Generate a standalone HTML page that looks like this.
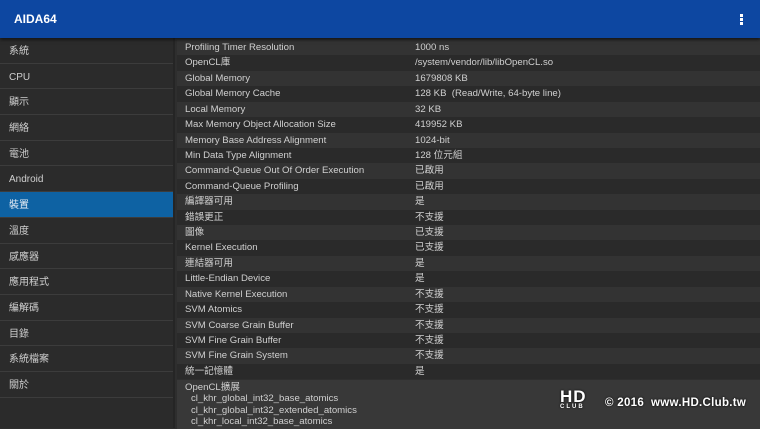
<!DOCTYPE html>
<html><head><meta charset="utf-8"><style>
*{margin:0;padding:0;box-sizing:border-box}
body{width:760px;height:428px;overflow:hidden;background:#2e2e2e;font-family:"Liberation Sans","Noto Sans CJK TC",sans-serif;color:#d0d0d0;position:relative}
#hdr{position:absolute;left:0;top:0;width:760px;height:38px;background:#0d47a1;box-shadow:0 2px 3px rgba(0,0,0,.5);z-index:2}
#hdr .t{position:absolute;left:14px;top:12px;font-size:12px;font-weight:bold;color:#fff}
#hdr .m{position:absolute;left:740px;top:14px;width:3px}
#hdr .m i{display:block;width:3px;height:2.5px;background:#fff;margin-bottom:1.5px}
#side{position:absolute;left:0;top:38px;width:175px;height:390px;background:#2b2b2b;border-right:2px solid #252525}
#side div{height:25.7px;line-height:26px;padding-top:1px;padding-left:9px;font-size:10px;border-bottom:1px solid #3c3c3c;color:#cfcfcf}
#side div.a{background:#0e62a3;color:#e8eef6}
#main{position:absolute;left:177px;top:40px;width:583px}
.r{height:15.43px;line-height:15.43px;font-size:9.6px;position:relative;background:#2a2a2a}
.r:nth-child(odd){background:#333333}
.r span{position:absolute;left:8px}
.r b{font-weight:normal;position:absolute;left:238px}
#ext{position:absolute;left:177px;top:379.5px;width:583px;height:49px;background:#383838;font-size:9.6px;padding:2px 8px;line-height:11.5px}
#ext div{padding-left:6px}
#wm{position:absolute;left:560px;top:389px;color:#fff;font-size:11.5px;font-weight:bold;text-shadow:0 0 2px #000}
#wm .hd{position:absolute;left:0;top:-1px;font-size:17px;line-height:17px;letter-spacing:1px}
#wm .cl{position:absolute;left:0;top:15px;font-size:6px;letter-spacing:2px}
#wm .tx{position:absolute;left:45px;top:8px;white-space:nowrap;letter-spacing:0.3px}
</style></head><body>
<div id="hdr"><div class="t">AIDA64</div><div class="m"><i></i><i></i><i></i></div></div>
<div id="side">
<div>系統</div><div>CPU</div><div>顯示</div><div>網絡</div><div>電池</div><div>Android</div><div class="a">裝置</div><div>溫度</div><div>感應器</div><div>應用程式</div><div>編解碼</div><div>目錄</div><div>系統檔案</div><div>關於</div>
</div>
<div id="main">
<div class="r"><span>Profiling Timer Resolution</span><b>1000 ns</b></div>
<div class="r"><span>OpenCL庫</span><b>/system/vendor/lib/libOpenCL.so</b></div>
<div class="r"><span>Global Memory</span><b>1679808 KB</b></div>
<div class="r"><span>Global Memory Cache</span><b>128 KB&nbsp; (Read/Write, 64-byte line)</b></div>
<div class="r"><span>Local Memory</span><b>32 KB</b></div>
<div class="r"><span>Max Memory Object Allocation Size</span><b>419952 KB</b></div>
<div class="r"><span>Memory Base Address Alignment</span><b>1024-bit</b></div>
<div class="r"><span>Min Data Type Alignment</span><b>128 位元組</b></div>
<div class="r"><span>Command-Queue Out Of Order Execution</span><b>已啟用</b></div>
<div class="r"><span>Command-Queue Profiling</span><b>已啟用</b></div>
<div class="r"><span>編譯器可用</span><b>是</b></div>
<div class="r"><span>錯誤更正</span><b>不支援</b></div>
<div class="r"><span>圖像</span><b>已支援</b></div>
<div class="r"><span>Kernel Execution</span><b>已支援</b></div>
<div class="r"><span>連結器可用</span><b>是</b></div>
<div class="r"><span>Little-Endian Device</span><b>是</b></div>
<div class="r"><span>Native Kernel Execution</span><b>不支援</b></div>
<div class="r"><span>SVM Atomics</span><b>不支援</b></div>
<div class="r"><span>SVM Coarse Grain Buffer</span><b>不支援</b></div>
<div class="r"><span>SVM Fine Grain Buffer</span><b>不支援</b></div>
<div class="r"><span>SVM Fine Grain System</span><b>不支援</b></div>
<div class="r"><span>統一記憶體</span><b>是</b></div>
</div>
<div id="ext">OpenCL擴展<div>cl_khr_global_int32_base_atomics</div><div>cl_khr_global_int32_extended_atomics</div><div>cl_khr_local_int32_base_atomics</div></div>
<div id="wm"><span class="hd">HD</span><span class="cl">CLUB</span><span class="tx">© 2016&nbsp; www.HD.Club.tw</span></div>
</body></html>
